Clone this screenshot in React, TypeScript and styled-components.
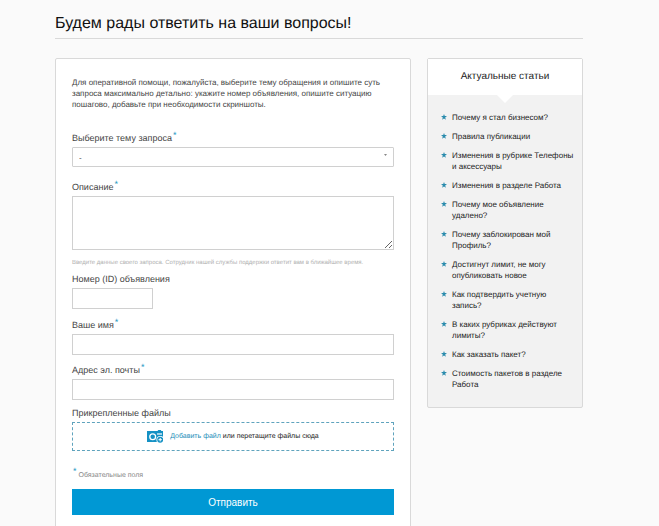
import React from "react";
import styled, { createGlobalStyle } from "styled-components";

const GlobalStyle = createGlobalStyle`
  *, *::before, *::after { box-sizing: border-box; }
  body {
    margin: 0;
    background: #fafafa;
    color: #444;
    font-family: "Liberation Sans", Arial, sans-serif;
    font-size: 8px;
    line-height: 11px;
    text-rendering: geometricPrecision;
  }
  input, select, textarea, button { font: inherit; color: inherit; }
`;

const Page = styled.div`
  padding: 12px 76px 0 55px;
`;

const Title = styled.h1`
  margin: 0;
  padding-bottom: 2px;
  border-bottom: 1px solid #d9d9d9;
  color: #111;
  font-size: 16px;
  font-weight: 400;
  line-height: 24px;
`;

const Columns = styled.div`
  display: flex;
  align-items: flex-start;
  gap: 16px;
  margin-top: 19px;
`;

const Card = styled.form`
  flex: 1;
  min-width: 0;
  display: flex;
  flex-direction: column;
  padding: 18px 16px;
  border: 1px solid #d9d9d9;
  border-radius: 2px;
  background: #fff;
`;

const Intro = styled.p`
  margin: 0 0 22px;
  padding-right: 8px;
`;

const Field = styled.div<{ $space: number }>`
  display: flex;
  flex-direction: column;
  align-items: stretch;
  gap: 3px;
  margin-bottom: ${(p) => p.$space}px;
`;

const Label = styled.label`
  font-size: 9px;
  line-height: 12px;
`;

const Star = styled.sup`
  margin-left: 1px;
  color: #1a94bf;
  font-size: 9px;
  line-height: 0;
  vertical-align: 3px;
`;

const Input = styled.input<{ $short?: boolean }>`
  width: ${(p) => (p.$short ? "81px" : "100%")};
  height: 21px;
  padding: 0 6px;
  border: 1px solid #d0d0d0;
  border-radius: 0;
  background: #fff;
`;

const SelectBox = styled.div`
  display: grid;
  align-items: center;

  & > * { grid-area: 1 / 1; }
`;

const Select = styled.select`
  appearance: none;
  width: 100%;
  height: 20px;
  padding: 0 6px;
  border: 1px solid #d0d0d0;
  border-radius: 1px;
  background: #fff;
`;

const Caret = styled.svg`
  justify-self: end;
  margin: 0 7px 4px 0;
  pointer-events: none;
`;

const Textarea = styled.textarea`
  display: block;
  width: 100%;
  height: 54px;
  padding: 6px;
  border: 1px solid #d0d0d0;
  border-radius: 0;
  background: #fff;
  resize: vertical;
`;

const Hint = styled.p`
  margin: 5px 0 0;
  color: #b0b0b0;
  font-size: 6px;
`;

const DropZone = styled.div`
  display: flex;
  align-items: center;
  justify-content: center;
  height: 29px;
  border: 1px dashed #5fa3bd;
  color: #222;
  font-size: 7px;
`;

const AddLink = styled.a`
  margin: 0 2px 0 7px;
  color: #1a8db8;
  text-decoration: none;
`;

const Required = styled.p`
  margin: 0 0 8px;
  color: #888;
  font-size: 7px;
`;

const Submit = styled.button`
  height: 26px;
  padding: 0;
  border: 0;
  background: #0098d4;
  color: #fff;
  font-size: 10px;
  cursor: pointer;
`;

const Sidebar = styled.aside`
  flex: 0 0 156px;
  border: 1px solid #d9d9d9;
  border-radius: 2px;
  background: #f2f2f2;
`;

const SidebarTitle = styled.h2`
  margin: 0;
  background: #fff;
  color: #222;
  font-size: 10px;
  font-weight: 400;
  line-height: 36px;
  text-align: center;
`;

const Notch = styled.svg`
  display: block;
  margin: 0 auto;
`;

const Articles = styled.ul`
  display: flex;
  flex-direction: column;
  gap: 8px;
  margin: 0;
  padding: 8px 8px 17px 13px;
  list-style: none;
`;

const Article = styled.li`
  display: flex;
  align-items: flex-start;
  gap: 5px;
`;

const Bullet = styled.svg`
  flex: none;
  margin-top: 2px;
  fill: #2b8cad;
`;

const ArticleLink = styled.a`
  color: #222;
  text-decoration: none;
`;

const articles = [
  "Почему я стал бизнесом?",
  "Правила публикации",
  "Изменения в рубрике Телефоны и аксессуары",
  "Изменения в разделе Работа",
  "Почему мое объявление удалено?",
  "Почему заблокирован мой Профиль?",
  "Достигнут лимит, не могу опубликовать новое",
  "Как подтвердить учетную запись?",
  "В каких рубриках действуют лимиты?",
  "Как заказать пакет?",
  "Стоимость пакетов в разделе Работа",
];

function CameraIcon() {
  return (
    <svg width="16" height="13" viewBox="0 0 16 13" aria-hidden="true">
      <path d="M0 1h10.500l.8-1h2.500l.6 1H16v11H0z" fill="#1591c4" />
      <circle cx="5.700" cy="6.800" r="2.900" fill="none" stroke="#fff" strokeWidth="1.300" />
      <path d="M10 4h5" stroke="#fff" strokeWidth="1.200" />
      <circle cx="13.200" cy="9.700" r="3.800" fill="#fff" />
      <circle cx="13.200" cy="9.700" r="3" fill="#1591c4" />
      <path d="M13.200 8v3.400M11.500 9.700h3.400" stroke="#fff" />
    </svg>
  );
}

export default function App() {
  return (
    <>
      <GlobalStyle />
      <Page>
        <Title>Будем рады ответить на ваши вопросы!</Title>
        <Columns>
          <Card onSubmit={(e) => e.preventDefault()}>
            <Intro>
              Для оперативной помощи, пожалуйста, выберите тему обращения и опишите суть запроса
              максимально детально: укажите номер объявления, опишите ситуацию пошагово, добавьте
              при необходимости скриншоты.
            </Intro>
            <Field $space={14}>
              <Label htmlFor="topic">
                Выберите тему запроса<Star>*</Star>
              </Label>
              <SelectBox>
                <Select id="topic">
                  <option>-</option>
                </Select>
                <Caret width="3" height="2" viewBox="0 0 3 2" aria-hidden="true">
                  <path d="M0 0h3L1.500 2z" fill="#888" />
                </Caret>
              </SelectBox>
            </Field>
            <Field $space={4}>
              <Label htmlFor="description">
                Описание<Star>*</Star>
              </Label>
              <Textarea id="description" />
              <Hint>
                Введите данные своего запроса. Сотрудник нашей службы поддержки ответит вам в
                ближайшее время.
              </Hint>
            </Field>
            <Field $space={10}>
              <Label htmlFor="ad-id">Номер (ID) объявления</Label>
              <Input id="ad-id" $short />
            </Field>
            <Field $space={9}>
              <Label htmlFor="name">
                Ваше имя<Star>*</Star>
              </Label>
              <Input id="name" />
            </Field>
            <Field $space={7}>
              <Label htmlFor="email">
                Адрес эл. почты<Star>*</Star>
              </Label>
              <Input id="email" type="email" />
            </Field>
            <Field $space={19}>
              <Label as="span">Прикрепленные файлы</Label>
              <DropZone>
                <CameraIcon />
                <AddLink href="#add">Добавить файл</AddLink>
                <span>или перетащите файлы сюда</span>
              </DropZone>
            </Field>
            <Required>
              <Star>*</Star> Обязательные поля
            </Required>
            <Submit type="submit">Отправить</Submit>
          </Card>
          <Sidebar>
            <SidebarTitle>Актуальные статьи</SidebarTitle>
            <Notch width="16" height="9" viewBox="0 0 16 9" aria-hidden="true">
              <path d="M0 0h16L8 8z" fill="#fff" />
            </Notch>
            <Articles>
              {articles.map((text) => (
                <Article key={text}>
                  <Bullet width="6" height="6" viewBox="0 0 10 10" aria-hidden="true">
                    <path d="M5 0l1.300 3.500H10L7 5.900l1.100 3.800L5 7.500 1.900 9.700 3 5.900 0 3.500h3.700z" />
                  </Bullet>
                  <ArticleLink href="#article">{text}</ArticleLink>
                </Article>
              ))}
            </Articles>
          </Sidebar>
        </Columns>
      </Page>
    </>
  );
}
